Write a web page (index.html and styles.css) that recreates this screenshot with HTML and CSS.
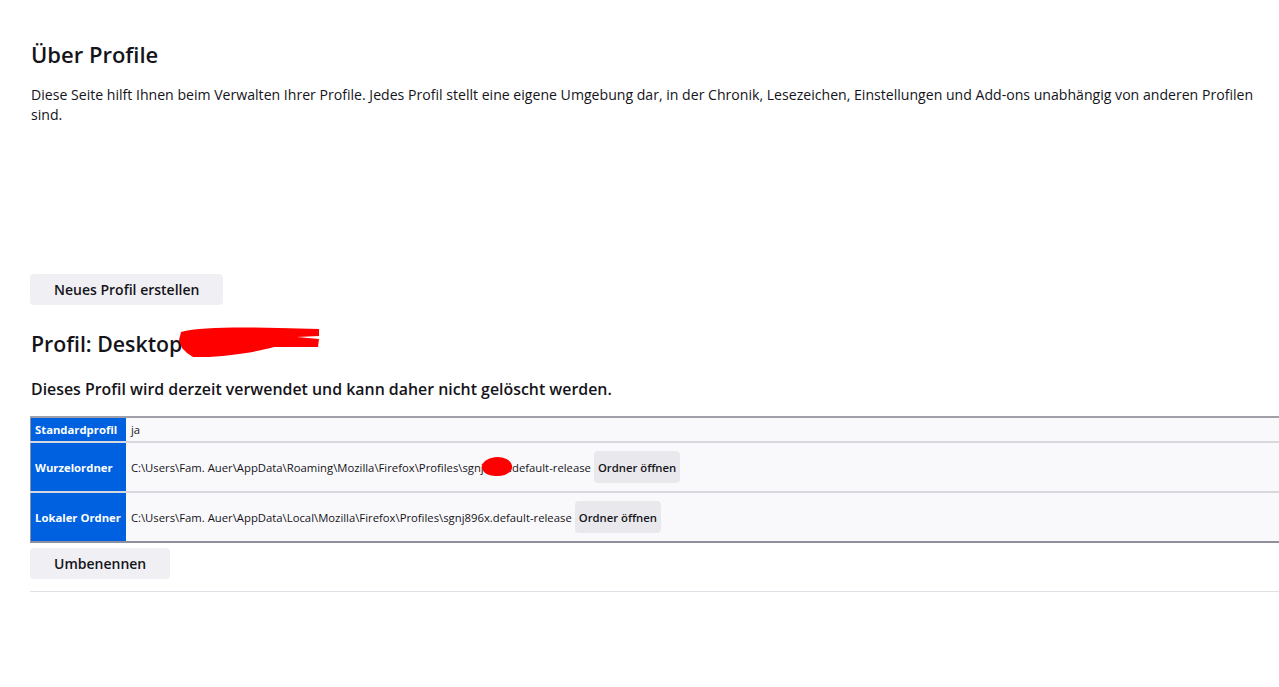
FILE: index.html
```html
<!DOCTYPE html>
<html lang="de">
<head>
<meta charset="utf-8">
<title>Über Profile</title>
<link rel="stylesheet" href="styles.css">
</head>
<body>
<main class="page">
  <h1 class="title">Über Profile</h1>
  <p class="intro">Diese Seite hilft Ihnen beim Verwalten Ihrer Profile. Jedes Profil stellt eine eigene Umgebung dar, in der Chronik, Lesezeichen, Einstellungen und Add-ons unabhängig von anderen Profilen sind.</p>

  <button class="btn btn-create" type="button">Neues Profil erstellen</button>

  <section class="profile">
    <h2 class="profile-name">Profil: Desktop<span class="redact-name"><svg width="141" height="32" viewBox="0 0 141 32"><path d="M2 6 C20 1 60 1 100 2 L140 3 L140 10 L118 11 L140 13 L139 21 L95 21 C80 25 60 29 30 31 L14 31 L8 27 L3 22 L0 14 Z" fill="#ff0000"/></svg></span></h2>
    <p class="in-use">Dieses Profil wird derzeit verwendet und kann daher nicht gelöscht werden.</p>

    <table class="info">
      <tr class="row-small">
        <th>Standardprofil</th>
        <td>ja</td>
      </tr>
      <tr>
        <th>Wurzelordner</th>
        <td><span class="path">C:\Users\Fam. Auer\AppData\Roaming\Mozilla\Firefox\Profiles\<span class="redacted">sgnj896<span class="redact-mark"></span></span>x.default-release</span><button class="btn btn-small" type="button">Ordner öffnen</button></td>
      </tr>
      <tr>
        <th>Lokaler Ordner</th>
        <td><span class="path">C:\Users\Fam. Auer\AppData\Local\Mozilla\Firefox\Profiles\sgnj896x.default-release</span><button class="btn btn-small" type="button">Ordner öffnen</button></td>
      </tr>
    </table>

    <button class="btn btn-rename" type="button">Umbenennen</button>
  </section>
  <hr class="sep">
</main>
</body>
</html>
```

FILE: styles.css
```css
html, body {
  margin: 0;
  padding: 0;
  background: #ffffff;
  overflow: hidden;
}

body {
  font-family: "Open Sans", "Noto Sans", "Liberation Sans", sans-serif;
  color: #15141a;
}

.page {
  width: 1262px;
  padding: 39px 0 0 30px;
}

.title {
  margin: 0 0 0 1px;
  font-size: 22px;
  line-height: 30px;
  font-weight: 600;
}

.intro {
  margin: 16px 0 0 1px;
  font-size: 14.1px;
  line-height: 20px;
  width: 1240px;
}

.btn {
  font-family: inherit;
  border: none;
  border-radius: 4px;
  background: #f0f0f4;
  color: #15141a;
  font-weight: 600;
  cursor: pointer;
}

.btn-create {
  display: block;
  margin-top: 149px;
  height: 31px;
  padding: 0 24px;
  font-size: 14px;
}

.profile-name {
  margin: 24px 0 0 1px;
  height: 30px;
  font-size: 21.3px;
  line-height: 30px;
  font-weight: 600;
  display: flex;
  align-items: center;
}

.redact-name {
  display: inline-flex;
  align-self: flex-start;
  margin-left: -3px;
  margin-top: -3px;
}

.in-use {
  margin: 18px 0 0 1px;
  font-size: 15.9px;
  line-height: 24px;
  font-weight: 600;
}

.info {
  margin-top: 15px;
  width: 1270px;
  border-collapse: collapse;
  border: 1px solid #8f8f9d;
  border-top: 2px solid #a0a0a8;
  font-size: 11.3px;
}

.info th {
  background: #0061e0;
  color: #ffffff;
  font-weight: 700;
  text-align: left;
  white-space: nowrap;
  padding: 0 5px 0 4px;
  width: 1px;
  border-bottom: 2px solid #d7d7de;
  height: 48px;
}

.info td {
  background: #f9f9fb;
  padding: 0 5px;
  border-bottom: 2px solid #d7d7de;
  height: 48px;
  white-space: nowrap;
}

.info tr:last-child th,
.info tr:last-child td {
  border-bottom: 2px solid #8f8f9d;
}

.info .row-small th,
.info .row-small td {
  height: 23px;
}

.path {
  vertical-align: middle;
}

.redacted {
  position: relative;
}

.redact-mark {
  position: absolute;
  left: 20px;
  top: -3px;
  width: 30px;
  height: 19px;
  background: #ff0000;
  border-radius: 45% 55% 40% 50%;
  transform: rotate(-6deg);
}

.btn-small {
  height: 32px;
  padding: 0 4px;
  font-size: 11.3px;
  margin-left: 3px;
  vertical-align: middle;
  background: #e9e9ed;
}

.btn-rename {
  display: block;
  margin-top: 5px;
  height: 31px;
  padding: 0 24px;
  font-size: 14px;
}

.sep {
  margin: 12px 0 0 0;
  border: none;
  border-top: 1px solid #e0e0e6;
  width: 1262px;
}
```
